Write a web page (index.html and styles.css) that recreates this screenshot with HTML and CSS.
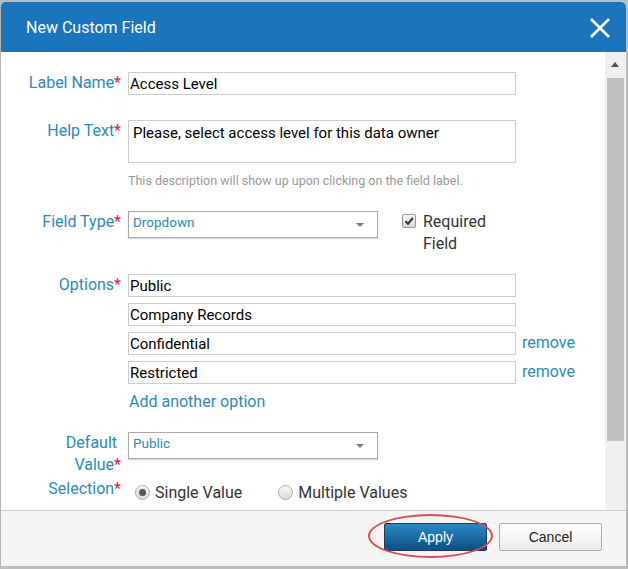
FILE: index.html
```html
<!DOCTYPE html>
<html lang="en">
<head>
    <meta charset="UTF-8">
    <meta name="viewport" content="width=device-width, initial-scale=1.0">
    <title>New Custom Field</title>
    <link rel="stylesheet" href="styles.css">
</head>
<body>
    <div class="dialog">
        <div class="header">
            <h1 class="title">New Custom Field</h1>
            <svg class="close" width="20" height="20" viewBox="0 0 20 20">
                <path d="M1 1 L19 19 M19 1 L1 19" stroke="#fff" stroke-width="2.6" fill="none"/>
            </svg>
        </div>

        <div class="main">
            <div class="form">
                <div class="row">
                    <label class="label">Label Name<span class="req">*</span></label>
                    <div class="field">
                        <input class="text" type="text" value="Access Level">
                    </div>
                </div>

                <div class="row row-help">
                    <label class="label">Help Text<span class="req">*</span></label>
                    <div class="field">
                        <div class="textarea">Please, select access level for this data owner</div>
                        <div class="hint">This description will show up upon clicking on the field label.</div>
                    </div>
                </div>

                <div class="row row-type">
                    <label class="label">Field Type<span class="req">*</span></label>
                    <div class="field field-inline">
                        <div class="select">Dropdown<span class="caret"></span></div>
                        <div class="check">
                            <span class="checkbox">
                                <svg width="10" height="10" viewBox="0 0 10 10">
                                    <path d="M1.5 5.2 L4 7.8 L8.8 2" stroke="#333" stroke-width="2" fill="none"/>
                                </svg>
                            </span>
                            <span class="check-text">Required<br>Field</span>
                        </div>
                    </div>
                </div>

                <div class="row row-options">
                    <label class="label">Options<span class="req">*</span></label>
                    <div class="field">
                        <div class="options">
                            <div class="option"><input class="text" type="text" value="Public"></div>
                            <div class="option"><input class="text" type="text" value="Company Records"></div>
                            <div class="option"><input class="text" type="text" value="Confidential"><a class="link">remove</a></div>
                            <div class="option"><input class="text" type="text" value="Restricted"><a class="link">remove</a></div>
                        </div>
                        <a class="link add">Add another option</a>
                    </div>
                </div>

                <div class="row row-default">
                    <label class="label">Default&nbsp;<br>Value<span class="req">*</span></label>
                    <div class="field">
                        <div class="select">Public<span class="caret"></span></div>
                    </div>
                </div>

                <div class="row row-selection">
                    <label class="label">Selection<span class="req">*</span></label>
                    <div class="field radios">
                        <span class="radio-item"><span class="radio checked"></span>Single Value</span>
                        <span class="radio-item"><span class="radio"></span>Multiple Values</span>
                    </div>
                </div>
            </div>

            <div class="scrollbar">
                <span class="scroll-up"></span>
                <div class="thumb"></div>
            </div>
        </div>

        <div class="footer">
            <button class="btn btn-primary">Apply</button>
            <button class="btn">Cancel</button>
            <div class="highlight"></div>
        </div>
    </div>
</body>
</html>
```

FILE: styles.css
```css
body {
    margin: 0;
    background-color: #bdbdbd;
    font-family: Roboto, "Liberation Sans", Arial, sans-serif;
    color: #333;
}
.dialog {
    width: 625px;
    height: 564px;
    margin-top: 2px;
    border-left: 1px solid #b5b5b5;
    background: white;
    display: flex;
    flex-direction: column;
    border-radius: 5px 5px 0 0;
    overflow: hidden;
}
.header {
    height: 50px;
    flex-shrink: 0;
    background-color: #1b75bc;
    display: flex;
    align-items: center;
    justify-content: space-between;
    padding: 0 16px 0 25px;
}
.title {
    margin: 0;
    font-size: 16px;
    font-weight: normal;
    color: white;
}
.close {
    margin-top: 1px;
}
.main {
    flex: 1;
    display: flex;
    min-height: 0;
}
.form {
    flex: 1;
    padding-top: 20px;
}
.row {
    display: grid;
    grid-template-columns: 120px 1fr;
    column-gap: 7px;
    align-items: start;
}
.row-help {
    margin-top: 25px;
}
.row-type {
    margin-top: 23px;
}
.row-options {
    margin-top: 19px;
}
.row-default {
    margin-top: 19px;
}
.row-selection {
    margin-top: 2px;
}
.label {
    text-align: right;
    font-size: 16px;
    line-height: 22px;
    color: #2a8abd;
}
.req {
    color: #e8194b;
}
.text {
    box-sizing: border-box;
    width: 388px;
    height: 23px;
    margin: 0;
    padding: 0 0 0 1px;
    border: 1px solid #ccc;
    font-family: Roboto, "Liberation Sans", Arial, sans-serif;
    font-size: 15px;
    color: #000;
    outline: none;
}
.textarea {
    box-sizing: border-box;
    width: 388px;
    height: 43px;
    padding: 3px 4px;
    border: 1px solid #ccc;
    font-size: 15px;
    line-height: 18px;
    color: #000;
}
.hint {
    margin-top: 10px;
    font-size: 12.5px;
    line-height: 15px;
    color: #999;
}
.field-inline {
    display: flex;
    align-items: flex-start;
    gap: 24px;
}
.select {
    position: relative;
    box-sizing: border-box;
    width: 250px;
    height: 27px;
    padding: 1px 4px;
    border: 1px solid #aaa;
    box-shadow: 0 1px 1px rgba(0, 0, 0, 0.15);
    font-size: 13.5px;
    line-height: 18px;
    color: #2a8abd;
}
.caret {
    position: absolute;
    right: 13px;
    top: 11px;
    border-left: 4px solid transparent;
    border-right: 4px solid transparent;
    border-top: 4px solid #777;
}
.check {
    display: flex;
    align-items: flex-start;
    gap: 7px;
}
.checkbox {
    box-sizing: border-box;
    width: 14px;
    height: 14px;
    margin-top: 3px;
    border: 1px solid #999;
    border-radius: 2px;
    background: linear-gradient(#f4f4f4, #d8d8d8);
    display: flex;
    align-items: center;
    justify-content: center;
}
.check-text {
    font-size: 16px;
    line-height: 22px;
    color: #333;
}
.options {
    display: flex;
    flex-direction: column;
    gap: 6px;
}
.option {
    display: flex;
    align-items: flex-start;
    gap: 6px;
}
.link {
    font-size: 16px;
    line-height: 22px;
    color: #2a8abd;
    cursor: pointer;
}
.add {
    display: block;
    margin-top: 7px;
    padding-left: 1px;
}
.radios {
    display: flex;
    align-items: center;
    gap: 36px;
    height: 22px;
    margin-top: 3px;
    padding-left: 7px;
}
.radio-item {
    display: flex;
    align-items: center;
    gap: 5px;
    font-size: 16px;
    color: #333;
}
.radio {
    box-sizing: border-box;
    width: 15px;
    height: 15px;
    border: 1px solid #aaa;
    border-radius: 50%;
    background: linear-gradient(#fafafa, #d9d9d9);
    display: flex;
    align-items: center;
    justify-content: center;
}
.radio.checked::after {
    content: "";
    width: 7px;
    height: 7px;
    border-radius: 50%;
    background: #555;
}
.scrollbar {
    width: 21px;
    flex-shrink: 0;
    background-color: #f0f0f0;
    display: flex;
    flex-direction: column;
    align-items: center;
}
.scroll-up {
    margin-top: 10px;
    margin-right: 1px;
    border-left: 4.5px solid transparent;
    border-right: 4.5px solid transparent;
    border-bottom: 5px solid #505050;
}
.thumb {
    width: 17px;
    height: 363px;
    margin-top: 11px;
    margin-right: 1px;
    background-color: #c1c1c1;
}
.footer {
    position: relative;
    box-sizing: border-box;
    height: 56px;
    flex-shrink: 0;
    border-top: 1px solid #cfcfcf;
    background-color: #f5f5f5;
    display: flex;
    justify-content: flex-end;
    align-items: flex-start;
    gap: 12px;
    padding: 12px 24px 0 0;
}
.btn {
    width: 103px;
    height: 28px;
    border: 1px solid #aaa;
    border-radius: 2px;
    background: linear-gradient(#ffffff, #ececec);
    font-family: "Liberation Sans", Arial, sans-serif;
    font-size: 14px;
    color: #222;
}
.btn-primary {
    border-color: #1d3c55;
    background: linear-gradient(#2b8ac3, #0b4e84);
    color: white;
}
.highlight {
    position: absolute;
    left: 367px;
    top: 3px;
    width: 121px;
    height: 40px;
    border: 2px solid #de4d4d;
    border-radius: 50%;
}
```
